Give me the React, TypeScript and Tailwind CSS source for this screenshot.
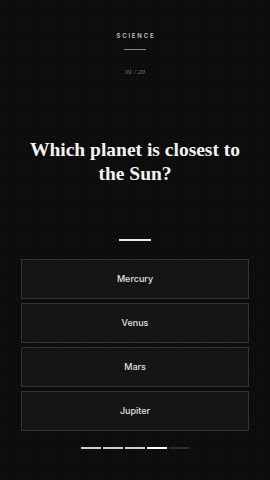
import React from "react";

export default function App() {
  const options = ["Mercury", "Venus", "Mars", "Jupiter"];
  const bars = ["bg-[#cfcfcf]", "bg-[#cfcfcf]", "bg-[#cfcfcf]", "bg-white", "bg-[#2e2e2e]"];
  return (
    <div
      className="w-[270px] h-[480px] bg-[#0c0c0c] flex flex-col items-center overflow-hidden"
      style={{
        backgroundImage:
          "radial-gradient(circle, rgba(255,255,255,0.03) 0.5px, transparent 0.6px)",
        backgroundSize: "3px 3px",
      }}
    >
      <div
        className="mt-[33px] text-[6px] leading-[6px] tracking-[0.3em] pl-[0.3em] text-[#c4c4c4] font-semibold"
        style={{ fontFamily: "Inter, 'Liberation Sans', sans-serif" }}
      >
        SCIENCE
      </div>
      <div className="mt-[10px] w-[22px] h-px bg-[#8a8a8a]" />
      <div
        className="mt-[18px] text-[7px] leading-[8px] italic text-[#858585]"
        style={{ fontFamily: "'Liberation Serif', 'DejaVu Serif', serif" }}
      >
        01 / 20
      </div>
      <h1
        className="mt-[62px] px-[22px] text-center text-[19.5px] leading-[24px] font-bold text-[#f2f2f2]"
        style={{ fontFamily: "'Liberation Serif', 'DejaVu Serif', serif" }}
      >
        Which planet is closest to the Sun?
      </h1>
      <div className="mt-[53px] w-[32px] h-[2px] bg-[#e8e8e8]" />
      <div className="mt-[18px] w-[228px] flex flex-col gap-[4px]">
        {options.map((o) => (
          <div
            key={o}
            className="h-[40px] border border-[#333333] bg-[#151515] flex items-center justify-center text-[9px] font-medium text-[#e0e0e0]"
            style={{ fontFamily: "Inter, 'Liberation Sans', sans-serif" }}
          >
            {o}
          </div>
        ))}
      </div>
      <div className="mt-[16px] flex gap-[2px]">
        {bars.map((b, i) => (
          <div key={i} className={`w-[20px] h-[2px] ${b}`} />
        ))}
      </div>
    </div>
  );
}
